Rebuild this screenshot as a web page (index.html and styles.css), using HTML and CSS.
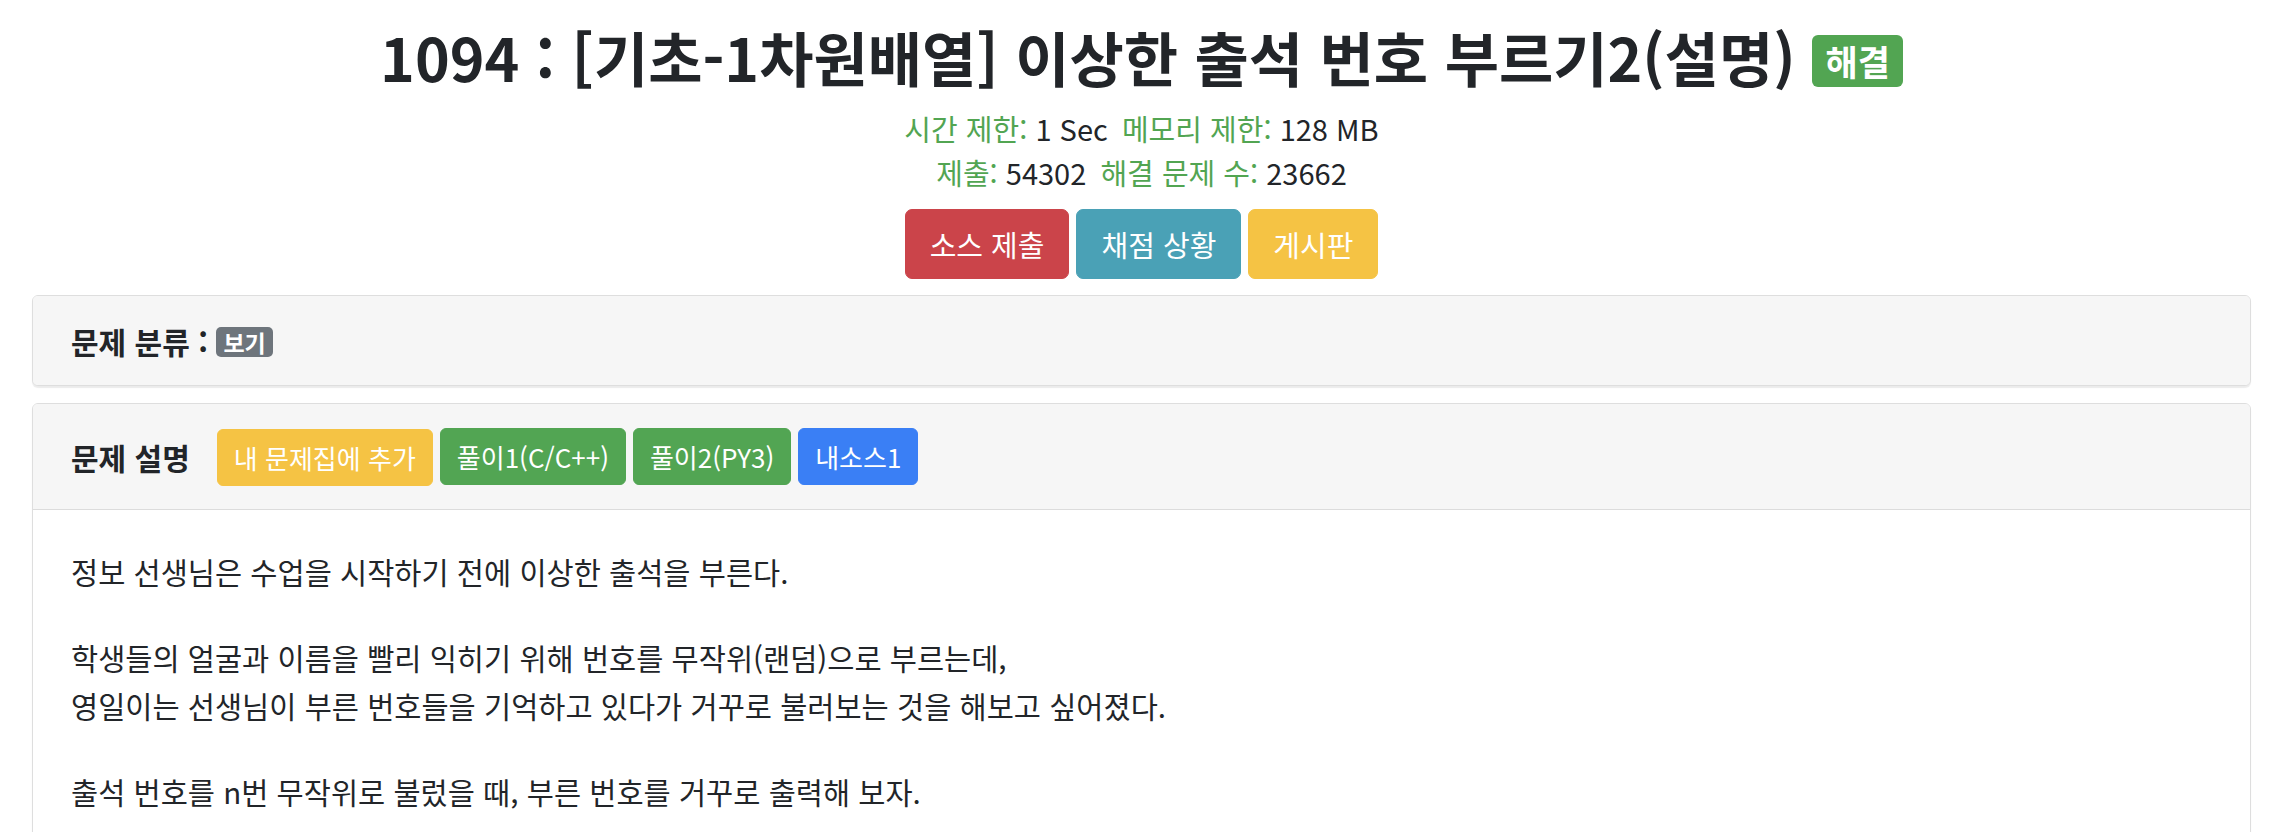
FILE: index.html
```html
<!DOCTYPE html>
<html lang="ko">
<head>
<meta charset="utf-8">
<title>1094 : [기초-1차원배열] 이상한 출석 번호 부르기2(설명)</title>
<link rel="stylesheet" href="styles.css">
</head>
<body>
<div class="page">
  <header class="head">
    <h1 class="title"><span>1094 : [기초-1차원배열] 이상한 출석 번호 부르기2(설명)</span><span class="badge badge-success">해결</span></h1>
    <div class="meta">
      <div><span class="lbl">시간 제한:</span> 1 Sec <span class="lbl gap">메모리 제한:</span> 128 MB</div>
      <div><span class="lbl">제출:</span> 54302 <span class="lbl gap">해결 문제 수:</span> 23662</div>
    </div>
    <div class="actions">
      <a class="btn btn-lg btn-danger">소스 제출</a>
      <a class="btn btn-lg btn-info">채점 상황</a>
      <a class="btn btn-lg btn-warning">게시판</a>
    </div>
  </header>

  <section class="card card-tags">
    <div class="card-header"><span class="hdr-title">문제 분류 :</span> <span class="badge badge-secondary">보기</span></div>
  </section>

  <section class="card">
    <div class="card-header flexhdr">
      <span class="hdr-title">문제 설명</span>
      <div class="hdr-btns">
        <a class="btn btn-sm-y btn-warning">내 문제집에 추가</a>
        <a class="btn btn-success">풀이1(C/C++)</a>
        <a class="btn btn-success">풀이2(PY3)</a>
        <a class="btn btn-primary">내소스1</a>
      </div>
    </div>
    <div class="card-body">
      <p>정보 선생님은 수업을 시작하기 전에 이상한 출석을 부른다.</p>
      <p>학생들의 얼굴과 이름을 빨리 익히기 위해 번호를 무작위(랜덤)으로 부르는데,<br>영일이는 선생님이 부른 번호들을 기억하고 있다가 거꾸로 불러보는 것을 해보고 싶어졌다.</p>
      <p>출석 번호를 n번 무작위로 불렀을 때, 부른 번호를 거꾸로 출력해 보자.</p>
    </div>
  </section>
</div>
</body>
</html>
```

FILE: styles.css
```css
html, body {
  margin: 0;
  padding: 0;
  background: #ffffff;
}

body {
  font-family: "Noto Sans CJK KR", "Noto Sans", sans-serif;
  color: #222529;
}

.page {
  padding: 22px 23px 0 32px;
}

.head {
  text-align: center;
}

.title {
  margin: 0;
  display: flex;
  justify-content: center;
  align-items: center;
  gap: 17px;
  font-size: 59px;
  line-height: 70px;
  font-weight: 700;
  color: #222529;
}

.badge {
  display: inline-block;
  color: #ffffff;
  font-weight: 700;
  border-radius: 6px;
  text-align: center;
}

.badge-success {
  background: #52a552;
  font-size: 35px;
  line-height: 38px;
  padding: 7px 13px;
  margin-top: 8px;
}

.badge-secondary {
  background: #6e757c;
  font-size: 23px;
  line-height: 26px;
  padding: 2px 7px;
  border-radius: 5px;
  vertical-align: 2px;
}

.meta {
  margin-top: 14px;
  font-size: 29px;
  line-height: 44px;
}

.lbl {
  color: #52a552;
}

.lbl.gap {
  margin-left: 6px;
}

.actions {
  margin-top: 15px;
  display: flex;
  justify-content: center;
  gap: 7px;
}

.btn {
  display: inline-block;
  color: #ffffff;
  text-decoration: none;
  border: 1px solid transparent;
  border-radius: 6px;
  font-size: 26px;
  line-height: 35px;
  padding: 10px 16px;
  white-space: nowrap;
}

.btn-lg {
  font-size: 29px;
  line-height: 44px;
  padding: 12px 24px;
  border-radius: 7px;
}

.btn-danger { background: #cb444a; border-color: #cb444a; }
.btn-info { background: #4aa1b6; border-color: #4aa1b6; }
.btn-warning { background: #f5c344; border-color: #f5c344; }
.btn-success { background: #52a553; border-color: #52a553; }
.btn-primary { background: #3a7ff5; border-color: #3a7ff5; }

.card {
  border: 1px solid #dedede;
  border-radius: 6px;
  background: #ffffff;
  box-shadow: 0 2px 1px rgba(0, 0, 0, 0.08);
  overflow: hidden;
}

.card-tags {
  margin-top: 16px;
}

.card-tags + .card {
  margin-top: 17px;
}

.card-header {
  background: #f6f6f6;
  padding: 22px 38px 22px 38px;
  font-size: 30px;
  line-height: 44px;
}

.card-tags .card-header {
  padding-top: 23px;
  padding-bottom: 22px;
}

.card + .card .card-header {
  border-bottom: 1px solid #dcdcdc;
}

.hdr-title {
  font-weight: 700;
  font-size: 30px;
}

.flexhdr {
  display: flex;
  align-items: center;
  gap: 27px;
  padding-top: 23px;
  padding-bottom: 23px;
}

.hdr-btns {
  display: flex;
  align-items: center;
  gap: 7px;
}

.btn-sm-y {
  margin-top: 2px;
}

.card-body {
  padding: 37px 38px;
  font-size: 29.5px;
  line-height: 48px;
}

.card-body p {
  margin: 0 0 38px 0;
}
```
